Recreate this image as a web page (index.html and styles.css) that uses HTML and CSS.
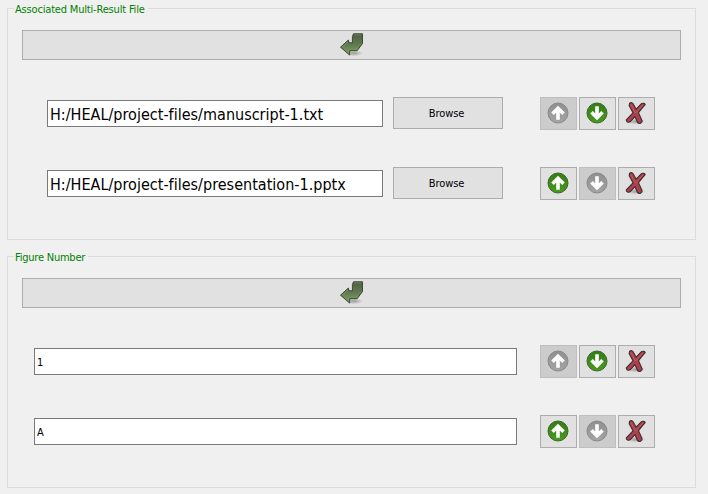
FILE: index.html
```
<!DOCTYPE html>
<html lang="en">
<head>
<meta charset="utf-8">
<title>Result files</title>
<link rel="stylesheet" href="styles.css">
</head>
<body>
<svg class="defs" aria-hidden="true">
  <defs>
    <linearGradient id="green" x1="0" y1="0" x2="0" y2="1"><stop offset="0" stop-color="#347a16"/><stop offset="1" stop-color="#4b9a20"/></linearGradient>
    <linearGradient id="gray" x1="0" y1="0" x2="0" y2="1"><stop offset="0" stop-color="#8f8f8f"/><stop offset="1" stop-color="#a5a5a5"/></linearGradient>
    <linearGradient id="moss" x1="0" y1="0" x2="0" y2="1"><stop offset="0" stop-color="#4d5f43"/><stop offset=".5" stop-color="#607950"/><stop offset="1" stop-color="#81a76b"/></linearGradient>
    <radialGradient id="shade"><stop offset="0" stop-color="#000" stop-opacity=".32"/><stop offset="1" stop-color="#000" stop-opacity="0"/></radialGradient>
    <symbol id="up" viewBox="0 0 24 24"><path d="M12 18.7V8M6.5 12.7 12 7.2 17.5 12.7" fill="none" stroke="#fff" stroke-width="3.6"/></symbol>
    <symbol id="cross" viewBox="0 0 24 26">
      <ellipse cx="12" cy="21.5" rx="9" ry="3" fill="url(#shade)"/>
      <path d="M5.6 3.2C7.2 2.1 8.7 2.6 9.4 4.2L12.2 9.2 17.2 3.9C18.4 2.8 20.9 3.3 21.2 4.7 18.6 7.6 16.6 9.9 14.5 12.6L18.2 21C17.8 23.6 14.7 24.2 13.6 22.4L11 16.7 6.1 21.8C4.5 22.8 2 21.7 2.3 19.9L9 12.8 5.2 5.8Z" fill="#ab404b" stroke="#3d2d30" stroke-width="1.1" stroke-linejoin="round"/>
      <path d="M6.8 4.4 11.5 13.2M18.9 4.9 11.7 13" fill="none" stroke="#d26b75" stroke-width="1" opacity=".6"/>
    </symbol>
    <symbol id="enter" viewBox="0 0 24 24">
      <ellipse cx="14" cy="20.2" rx="9" ry="3" fill="url(#shade)"/>
      <path d="M13.5 .8H22.5V10.6L17.1 17.7H9.7V22.1L.5 14.2 8.4 7 9 9.8H12.4V3.6Z" fill="url(#moss)" stroke="#38422f" stroke-width=".95" stroke-linejoin="round"/>
      <path d="M14 1.9H21.4M2.4 13.9 7.9 9" fill="none" stroke="#93a889" stroke-width=".8" opacity=".6"/>
    </symbol>
  </defs>
</svg>
<main>
  <section class="group">
    <h2 class="legend files">Associated Multi-Result File</h2>
    <button class="btn add"><svg><use href="#enter"/></svg></button>
    <div class="row">
      <div class="field path">H:/HEAL/project-files/manuscript-1.txt</div>
      <button class="btn browse">Browse</button>
      <div class="tools">
        <button class="btn tool off"><svg viewBox="0 0 24 24"><circle cx="12" cy="12" r="10" fill="url(#gray)" stroke="#898989"/><use href="#up"/></svg></button>
        <button class="btn tool"><svg viewBox="0 0 24 24"><circle cx="12" cy="12" r="10" fill="url(#green)" stroke="#3c672a"/><use href="#up" transform="rotate(180 12 12)"/></svg></button>
        <button class="btn tool"><svg class="x"><use href="#cross"/></svg></button>
      </div>
    </div>
    <div class="row">
      <div class="field path">H:/HEAL/project-files/presentation-1.pptx</div>
      <button class="btn browse">Browse</button>
      <div class="tools">
        <button class="btn tool"><svg viewBox="0 0 24 24"><circle cx="12" cy="12" r="10" fill="url(#green)" stroke="#3c672a"/><use href="#up"/></svg></button>
        <button class="btn tool off"><svg viewBox="0 0 24 24"><circle cx="12" cy="12" r="10" fill="url(#gray)" stroke="#898989"/><use href="#up" transform="rotate(180 12 12)"/></svg></button>
        <button class="btn tool"><svg class="x"><use href="#cross"/></svg></button>
      </div>
    </div>
  </section>
  <section class="group">
    <h2 class="legend figure">Figure Number</h2>
    <button class="btn add"><svg><use href="#enter"/></svg></button>
    <div class="row wide">
      <div class="field">1</div>
      <div class="tools">
        <button class="btn tool off"><svg viewBox="0 0 24 24"><circle cx="12" cy="12" r="10" fill="url(#gray)" stroke="#898989"/><use href="#up"/></svg></button>
        <button class="btn tool"><svg viewBox="0 0 24 24"><circle cx="12" cy="12" r="10" fill="url(#green)" stroke="#3c672a"/><use href="#up" transform="rotate(180 12 12)"/></svg></button>
        <button class="btn tool"><svg class="x"><use href="#cross"/></svg></button>
      </div>
    </div>
    <div class="row wide">
      <div class="field">A</div>
      <div class="tools">
        <button class="btn tool"><svg viewBox="0 0 24 24"><circle cx="12" cy="12" r="10" fill="url(#green)" stroke="#3c672a"/><use href="#up"/></svg></button>
        <button class="btn tool off"><svg viewBox="0 0 24 24"><circle cx="12" cy="12" r="10" fill="url(#gray)" stroke="#898989"/><use href="#up" transform="rotate(180 12 12)"/></svg></button>
        <button class="btn tool"><svg class="x"><use href="#cross"/></svg></button>
      </div>
    </div>
  </section>
</main>
</body>
</html>
```
FILE: styles.css
```
* { box-sizing: border-box; }
body {
  margin: 0;
  height: 494px;
  overflow: hidden;
  background: #f0f0f0;
  color: #000;
  font: 11px/14px "DejaVu Sans Condensed", "DejaVu Sans", sans-serif;
  font-stretch: condensed;
}
.defs { position: absolute; width: 0; height: 0; }
main {
  display: flex;
  flex-direction: column;
  gap: 16px;
  padding: 8px 12px 0 7px;
}
.group {
  display: flex;
  flex-direction: column;
  height: 232px;
  padding: 0 14px;
  border: 1px solid #dcdcdc;
}
.legend {
  align-self: flex-start;
  height: 14px;
  margin: -6px 0 0 -8px;
  padding: 0 0 0 1px;
  background: #f0f0f0;
  color: #008000;
  font-size: 11px;
  font-weight: 400;
  white-space: nowrap;
}
.files { width: 134px; letter-spacing: -.18px; }
.figure { width: 74px; letter-spacing: -.22px; }
.btn {
  display: flex;
  justify-content: center;
  flex: none;
  margin: 0;
  padding: 0;
  border: 1px solid #adadad;
  border-radius: 0;
  background: #e1e1e1;
  color: #000;
  font: inherit;
}
.add { height: 30px; margin-top: 13px; }
.add svg { width: 24px; height: 24px; margin-top: 2px; }
.row {
  display: flex;
  height: 33px;
  margin: 37px 0 0 25px;
}
.wide { margin-left: 12px; }
.field {
  flex: none;
  width: 483px;
  height: 27px;
  margin-top: 3px;
  padding-left: 2px;
  border: 1px solid #7a7a7a;
  background: #fff;
  line-height: 27px;
  white-space: nowrap;
}
.path {
  width: 336px;
  font-size: 16px;
  letter-spacing: .02px;
  font-variant-ligatures: none;
}
.browse {
  align-items: center;
  width: 110px;
  height: 32px;
  margin-left: 10px;
  padding: 2px 3px 0 0;
  letter-spacing: -.1px;
}
.tools { display: flex; gap: 2px; margin-left: 37px; }
.wide .tools { margin-left: 23px; }
.tool { width: 37px; height: 33px; }
.tool svg { width: 24px; height: 24px; margin: 2.5px 2px 0 0; }
.tool .x { height: 26px; margin: 2px 1px 0 0; }
.off { border-color: #bfbfbf; background: #ccc; }
```
